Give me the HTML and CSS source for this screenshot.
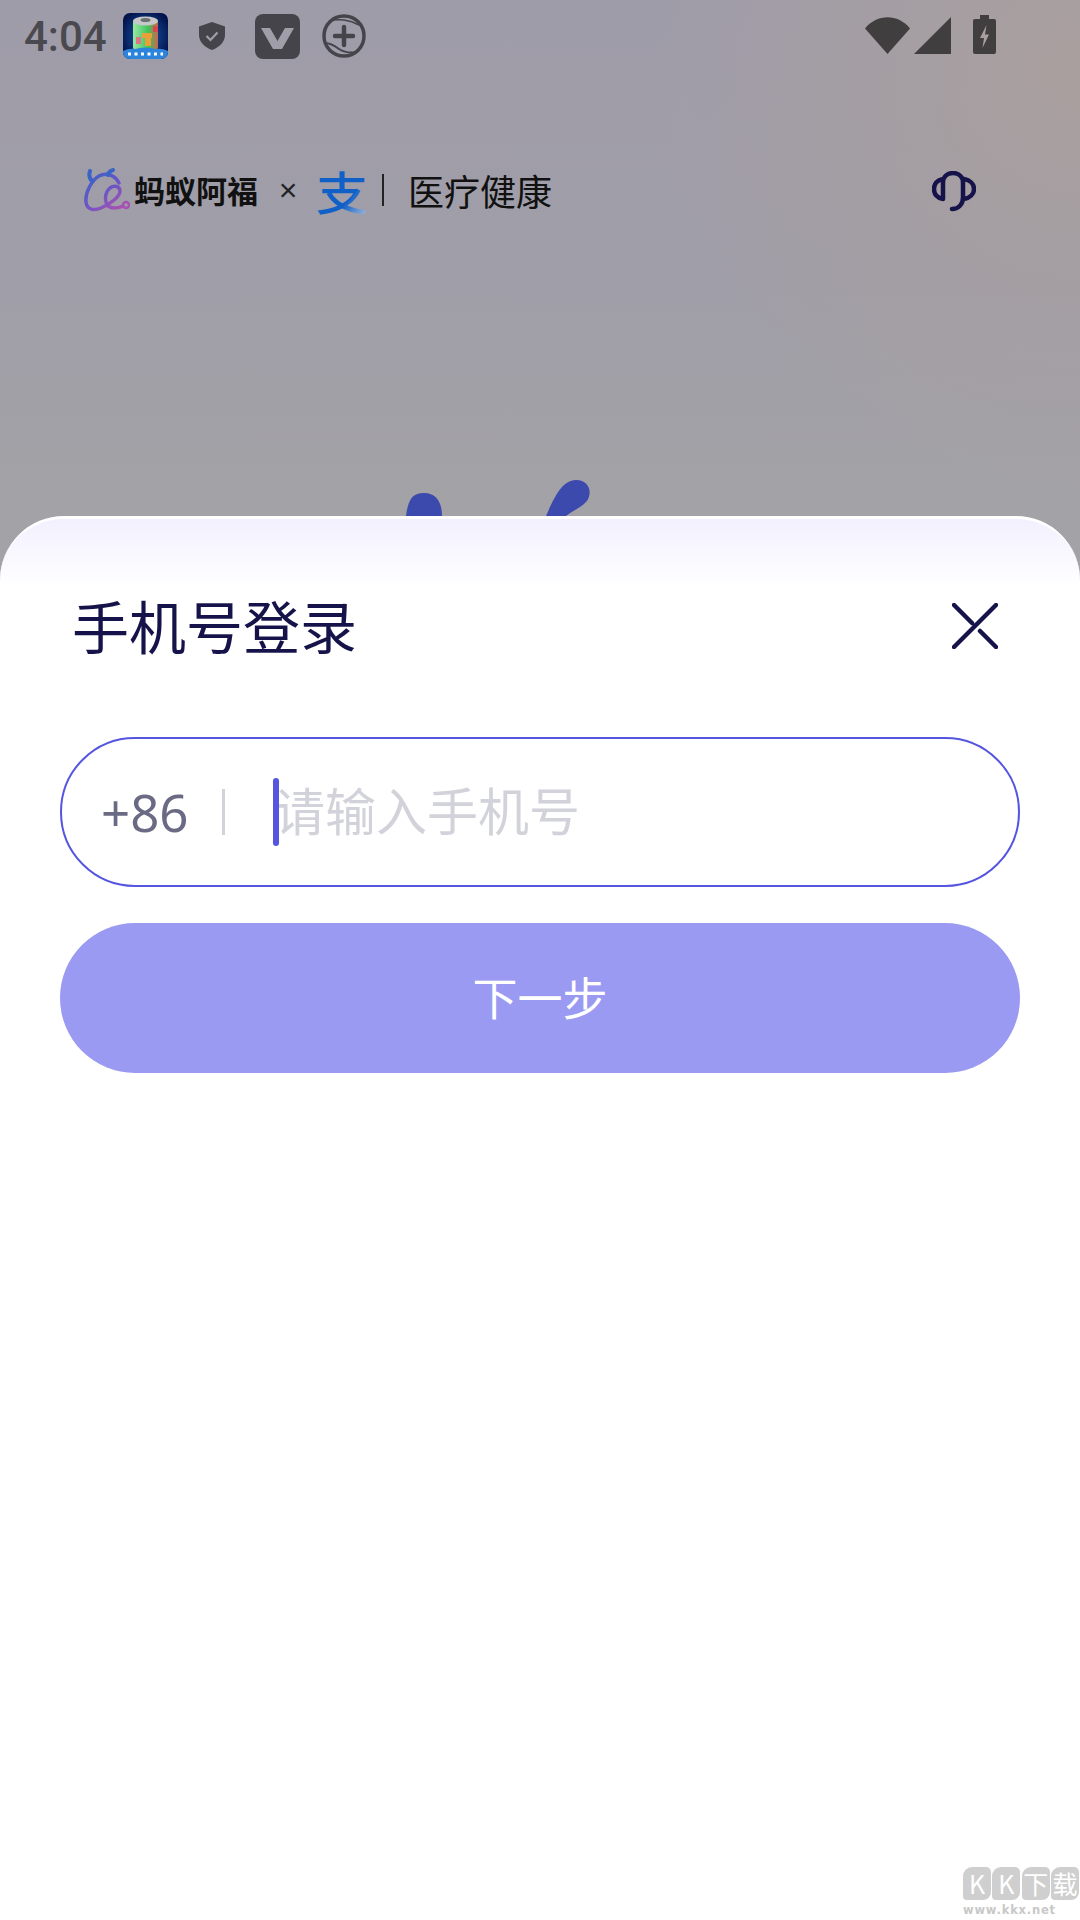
FILE: index.html
```html
<!DOCTYPE html>
<html lang="zh-CN">
<head>
    <meta charset="UTF-8">
    <meta name="viewport" content="width=device-width, initial-scale=1.0">
    <title>手机号登录</title>
    <link rel="stylesheet" href="styles.css">
</head>
<body>
<div class="page">
    <div class="status-bar">
        <div class="status-left">
            <span class="time">4:04</span>
            <svg class="app-icon" viewBox="0 0 45 46">
                <defs>
                    <radialGradient id="appBg" cx="50%" cy="50%" r="60%">
                        <stop offset="0" stop-color="#1a5cb0"/>
                        <stop offset="1" stop-color="#03124a"/>
                    </radialGradient>
                    <linearGradient id="cell" x1="0" x2="1" y1="0" y2="0">
                        <stop offset="0" stop-color="#9be8a4"/>
                        <stop offset="0.6" stop-color="#3fc45c"/>
                        <stop offset="1" stop-color="#c9674c"/>
                    </linearGradient>
                </defs>
                <rect width="45" height="46" rx="7" fill="url(#appBg)"/>
                <rect x="10" y="7" width="25" height="30" rx="3" fill="url(#cell)"/>
                <rect x="19" y="20" width="10" height="5" fill="#e8a038"/>
                <rect x="22" y="24" width="6" height="9" fill="#e8a038"/>
                <rect x="30" y="13" width="5" height="6" fill="#d8484c"/>
                <rect x="13" y="24" width="5" height="7" fill="#e0728a"/>
                <ellipse cx="22.500" cy="8" rx="12.500" ry="4.500" fill="#c4c8c8"/>
                <ellipse cx="22.500" cy="7" rx="5" ry="2" fill="#6d7072"/>
                <path d="M0 38 Q6 35 12 36 Q22 33 33 36 Q39 35 45 38 V39 A7 7 0 0 1 38 46 H7 A7 7 0 0 1 0 39 Z" fill="#2c84dc"/>
                <path d="M5 41 H40" stroke="#fff" stroke-width="3" stroke-dasharray="3 3.500"/>
            </svg>
            <svg class="shield-icon" viewBox="0 0 26 28">
                <path d="M13 0 L26 4.500 V13 C26 20 20 25.500 13 28 C6 25.500 0 20 0 13 V4.500 Z" fill="#45444a"/>
                <path d="M7.500 14 L11.500 18 L18.500 10.500" fill="none" stroke="#a09ea8" stroke-width="2.200"/>
            </svg>
            <svg class="v-icon" viewBox="0 0 45 45">
                <rect width="45" height="45" rx="8" fill="#45444a"/>
                <path d="M6 14 H15 L22.500 27 L30 14 H39 L27 35 H18 Z" fill="#a09ea8"/>
            </svg>
            <svg class="plus-icon" viewBox="0 0 44 44">
                <circle cx="22" cy="22" r="20" fill="none" stroke="#45444a" stroke-width="3.500"/>
                <path d="M3 29 Q9 29 17 35 Q25 40 35 38" fill="none" stroke="#45444a" stroke-width="2"/>
                <path d="M8 7 Q14 5 22 6 Q30 7 37 11" fill="none" stroke="#45444a" stroke-width="1.500"/>
                <path d="M22 13 V31 M13 22 H31" stroke="#45444a" stroke-width="4.500" stroke-linecap="round"/>
            </svg>
        </div>
        <div class="status-right">
            <svg class="wifi-icon" viewBox="0 0 45 37">
                <path d="M0 11.500 C12 -3.500 33 -3.500 45 11.500 L22.500 37 Z" fill="#403e3f"/>
            </svg>
            <svg class="signal-icon" viewBox="0 0 37 37">
                <path d="M37 0 V37 H0 Z" fill="#403e3f"/>
            </svg>
            <svg class="battery-icon" viewBox="0 0 23 39">
                <path d="M7 0 H16 V4 H21 A2 2 0 0 1 23 6 V37 A2 2 0 0 1 21 39 H2 A2 2 0 0 1 0 37 V6 A2 2 0 0 1 2 4 H7 Z" fill="#403e3f"/>
                <path d="M13.500 10 L7 23 H11 L9.500 33 L16 19.500 H12 Z" fill="#a89f9f"/>
            </svg>
        </div>
    </div>

    <div class="brand-row">
        <div class="brand">
            <svg class="afu-logo" viewBox="0 0 46 44">
                <defs>
                    <linearGradient id="afuGrad" x1="0" x2="0.8" y1="0" y2="1">
                        <stop offset="0" stop-color="#3c64c6"/>
                        <stop offset="0.55" stop-color="#6b55c6"/>
                        <stop offset="1" stop-color="#a552b4"/>
                    </linearGradient>
                </defs>
                <path d="M35 15 C31 7 22 4 15 8 C8 12 1 24 2 34 C3 42 10 43 17 40 C26 36 36 29 36 23 C36 18 30 17 26 20 C21 24 20 33 24 38 C28 41 35 40 39 38" fill="none" stroke="url(#afuGrad)" stroke-width="3.500" stroke-linecap="round"/>
                <circle cx="42" cy="37" r="3" fill="none" stroke="#a552b4" stroke-width="2.500"/>
                <path d="M6 3 Q4 9 8 13 M29 2 Q25 3 24 7" fill="none" stroke="#3c64c6" stroke-width="4" stroke-linecap="round"/>
            </svg>
            <span class="afu-name">蚂蚁阿福</span>
            <span class="times">×</span>
            <span class="zhi">支</span>
            <span class="brand-line"></span>
            <span class="brand-title">医疗健康</span>
        </div>
        <svg class="support-icon" viewBox="0 0 44 42">
            <path d="M11 28 V12 C11 5 16 2 21 2 C27 2 31 6 31 12 V26 C31 34 26 38 20 38 M11 28 C5 27 2 23 2 18 C2 13 5 9 11 8 M32 8 C38 9 42 13 42 18 C42 23 38 27 32 28" fill="none" stroke="#16134a" stroke-width="4.500" stroke-linecap="round"/>
        </svg>
    </div>

    <div class="hero">
        <svg class="mascot-ears" viewBox="0 0 190 36">
            <path d="M2 36 C4 20 8 13 20 13 C32 13 38 22 38 36 Z" fill="#3c49ad"/>
            <path d="M142 36 C150 18 158 0 172 0 C186 0 189 14 182 22 C176 28 170 30 162 36 Z" fill="#3c49ad"/>
        </svg>
    </div>

    <div class="sheet">
        <div class="sheet-head">
            <h1 class="sheet-title">手机号登录</h1>
            <svg class="close-icon" viewBox="0 0 46 46">
                <path d="M2 44 L44 2 M2 2 L20 20 M28 28 L44 44" fill="none" stroke="#16134a" stroke-width="4.500" stroke-linecap="round"/>
            </svg>
        </div>
        <div class="phone-field">
            <span class="country-code">+86</span>
            <span class="field-line"></span>
            <div class="phone-input">
                <span class="caret"></span>
                <span class="placeholder">请输入手机号</span>
            </div>
        </div>
        <button class="next-btn">下一步</button>
    </div>

    <div class="watermark">
        <div class="wm-blocks">
            <span class="wm-block">K</span>
            <span class="wm-block">K</span>
            <span class="wm-block">下</span>
            <span class="wm-block">载</span>
        </div>
        <div class="wm-url">www.kkx.net</div>
    </div>
</div>
</body>
</html>
```

FILE: styles.css
```css
html, body {
    margin: 0;
    padding: 0;
}
body {
    width: 1080px;
    height: 1920px;
    overflow: hidden;
    font-family: "Noto Sans CJK SC", "Noto Sans", sans-serif;
}
.page {
    position: relative;
    width: 1080px;
    height: 1920px;
    display: flex;
    flex-direction: column;
    background: radial-gradient(circle 420px at 100% 70px, #a99f9e 0, rgba(169, 159, 158, 0) 100%),
        linear-gradient(180deg, #9f9ca9 0, #a09ea8 260px, #a3a2a6 520px);
}
svg {
    display: block;
    flex: none;
}

/* status bar */
.status-bar {
    height: 74px;
    box-sizing: border-box;
    padding: 13px 84px 0 24px;
    display: flex;
    justify-content: space-between;
    align-items: flex-start;
}
.status-left {
    display: flex;
    align-items: center;
    height: 46px;
}
.status-right {
    display: flex;
    align-items: flex-start;
    padding-top: 4px;
}
.time {
    width: 99px;
    padding-top: 2px;
    font-family: Roboto, sans-serif;
    font-size: 42px;
    font-weight: 500;
    line-height: 46px;
    color: #4a494f;
}
.app-icon {
    width: 45px;
    height: 46px;
    margin-right: 31px;
}
.shield-icon {
    width: 26px;
    height: 28px;
    margin-right: 30px;
}
.v-icon {
    width: 45px;
    height: 45px;
    margin-right: 22px;
}
.plus-icon {
    width: 44px;
    height: 44px;
}
.wifi-icon {
    width: 45px;
    height: 37px;
    margin-right: 4px;
}
.signal-icon {
    width: 37px;
    height: 37px;
    margin-right: 22px;
}
.battery-icon {
    width: 23px;
    height: 39px;
    margin-top: -2px;
}

/* brand row */
.brand-row {
    height: 90px;
    margin-top: 71px;
    padding: 0 84px;
    display: flex;
    justify-content: space-between;
    align-items: center;
}
.brand {
    display: flex;
    align-items: center;
}
.afu-logo {
    width: 46px;
    height: 44px;
    margin-right: 4px;
}
.afu-name {
    font-size: 31px;
    font-weight: 700;
    color: #111;
    line-height: 40px;
}
.times {
    width: 20px;
    margin: 0 18px 0 20px;
    font-family: "Liberation Sans", sans-serif;
    font-size: 32px;
    line-height: 36px;
    color: #222;
    text-align: center;
}
.zhi {
    width: 46px;
    margin-right: 8px;
    font-size: 46px;
    font-weight: 500;
    line-height: 50px;
    color: transparent;
    background: linear-gradient(125deg, #1160c8 65%, #a9bedc 100%);
    -webkit-background-clip: text;
    background-clip: text;
    transform: scaleX(1.14);
    transform-origin: left center;
}
.brand-line {
    width: 2px;
    height: 32px;
    margin: 0 24px 0 12px;
    background: #222;
}
.brand-title {
    font-size: 36px;
    font-weight: 400;
    line-height: 44px;
    color: #111;
}
.support-icon {
    width: 44px;
    height: 42px;
    margin: 4px 20px 0 0;
}

/* blurred page behind the sheet */
.hero {
    height: 281px;
    display: flex;
    justify-content: center;
    align-items: flex-end;
}
.mascot-ears {
    width: 190px;
    height: 36px;
    margin-left: -82px;
}

/* login sheet */
.sheet {
    flex: 1;
    box-sizing: border-box;
    padding: 0 60px;
    border-top: 3px solid #fff;
    border-radius: 64px 64px 0 0;
    background: linear-gradient(180deg, #f3f0fe 0, #fbfaff 45px, #fff 70px);
}
.sheet-head {
    height: 218px;
    padding: 72px 22px 0 12px;
    box-sizing: border-box;
    display: flex;
    justify-content: space-between;
    align-items: flex-start;
}
.sheet-title {
    margin: 0;
    font-size: 57px;
    font-weight: 400;
    line-height: 66px;
    color: #16134a;
}
.close-icon {
    width: 46px;
    height: 46px;
    margin-top: 12px;
}
.phone-field {
    height: 150px;
    box-sizing: border-box;
    padding-left: 39px;
    display: flex;
    align-items: center;
    border: 2px solid #5555e0;
    border-radius: 75px;
}
.country-code {
    width: 121px;
    font-family: "Noto Sans", sans-serif;
    font-size: 51px;
    font-weight: 400;
    color: #6b6a85;
}
.field-line {
    width: 3px;
    height: 46px;
    margin-right: 51px;
    background: #d2d2da;
}
.phone-input {
    position: relative;
    margin-left: -2px;
    display: flex;
    height: 64px;
}
.placeholder {
    margin-top: -3px;
    font-size: 51px;
    font-weight: 400;
    line-height: 64px;
    color: #d2d2da;
}
.caret {
    position: absolute;
    left: -1px;
    top: -2px;
    width: 6px;
    height: 68px;
    border-radius: 3px;
    background: #5555e0;
}
.next-btn {
    display: block;
    width: 100%;
    height: 150px;
    margin-top: 36px;
    padding: 0 0 3px;
    border: none;
    border-radius: 75px;
    background-color: #9b9af2;
    color: #fff;
    font-family: inherit;
    font-size: 45px;
    font-weight: 400;
}

/* site watermark */
.watermark {
    position: absolute;
    right: 1px;
    bottom: 3px;
    width: 116px;
}
.wm-blocks {
    display: flex;
    justify-content: space-between;
}
.wm-block {
    width: 28px;
    height: 33px;
    border-radius: 9px 5px 8px 4px;
    background: #cfcfcf;
    color: #fff;
    font-size: 25px;
    font-weight: 400;
    line-height: 33px;
    text-align: center;
}
.wm-url {
    margin-top: 3px;
    padding-right: 24px;
    font-family: "DejaVu Sans", sans-serif;
    font-size: 11.500px;
    font-weight: 700;
    letter-spacing: 0.8px;
    color: #c8c8c8;
    text-align: right;
    white-space: nowrap;
}
```
